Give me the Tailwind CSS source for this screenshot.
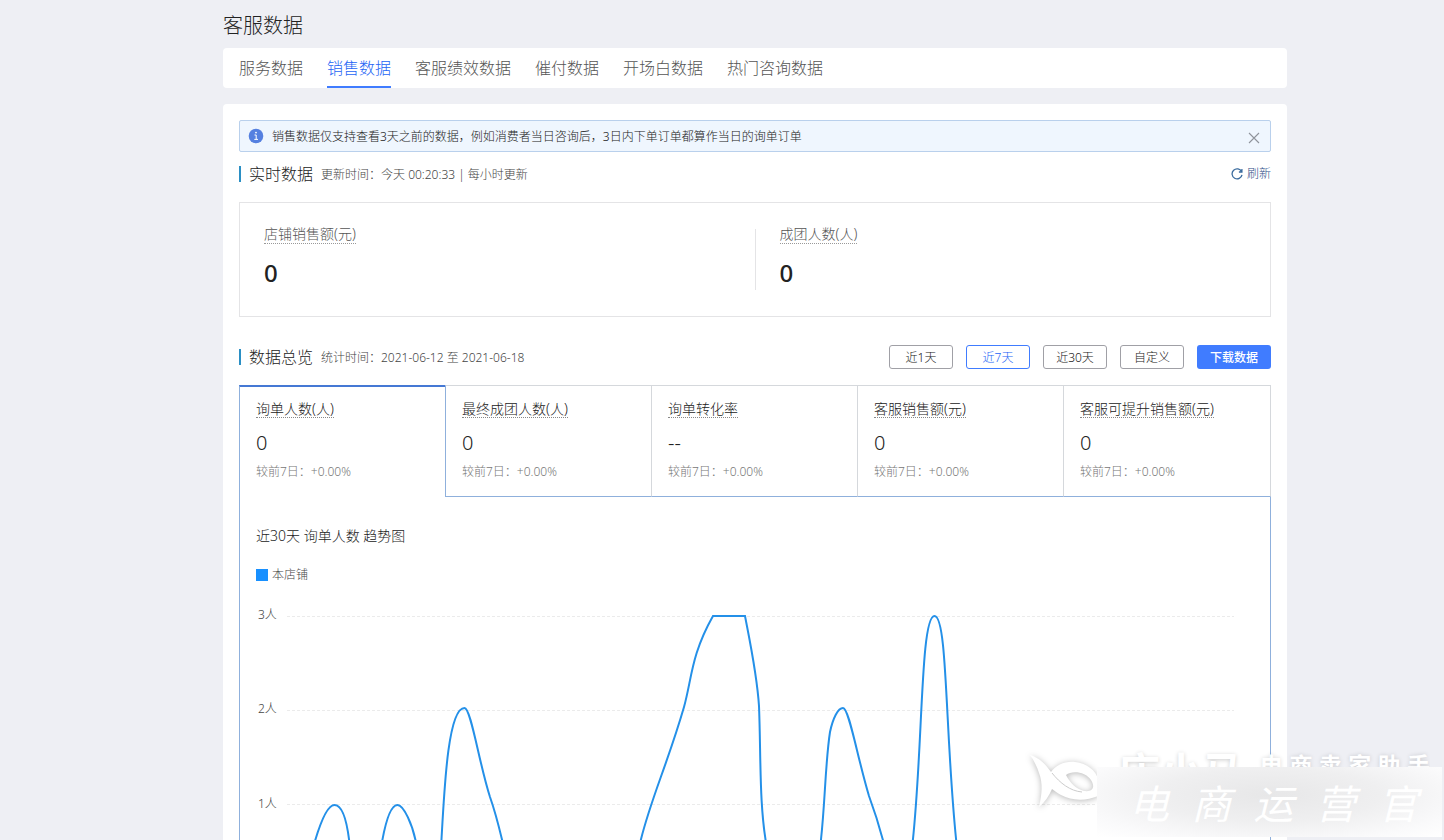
<!DOCTYPE html>
<html lang="zh-CN">
<head>
<meta charset="utf-8">
<title>客服数据</title>
<script src="https://cdn.jsdelivr.net/npm/@tailwindcss/browser@4"></script>
</head>
<body class="bg-[#eeeff4]">
<div class="relative h-screen overflow-hidden pl-[66px] font-['Noto_Sans','Noto_Sans_CJK_SC',sans-serif] font-light text-[#222]">
  <div class="mx-auto flex h-full max-w-[1064px] flex-col">
    <h1 class="h-12 shrink-0 pt-2.5 text-xl leading-8">客服数据</h1>
    <nav class="flex h-10 shrink-0 gap-6 rounded bg-white px-4 text-base leading-10 text-[#555]">
      <a href="#" class="block h-10">服务数据</a>
      <a href="#" class="block h-10 border-b-2 border-[#407cff] text-[#2464f5]" aria-current="page">销售数据</a>
      <a href="#" class="block h-10">客服绩效数据</a>
      <a href="#" class="block h-10">催付数据</a>
      <a href="#" class="block h-10">开场白数据</a>
      <a href="#" class="block h-10">热门咨询数据</a>
    </nav>
    <main class="mt-4 grow rounded-t bg-white p-4">
      <div class="flex h-8 items-center rounded-xs border border-[#b9d0ec] bg-[#eff6fe] px-2 text-xs" role="status">
        <svg class="mr-2 size-4" viewBox="0 0 16 16"><circle cx="8" cy="8" r="7.300" fill="#5580e0"/><path d="M6.500 7h1.700v4.200M6.300 11.400h3.700" stroke="#fff" fill="none"/><circle cx="8" cy="4.600" r=".9" fill="#fff"/></svg>
        <p class="grow pt-0.5">销售数据仅支持查看3天之前的数据，例如消费者当日咨询后，3日内下单订单都算作当日的询单订单</p>
        <button class="mt-1 flex size-4 items-center justify-center" aria-label="关闭"><svg class="size-3" viewBox="0 0 12 12" stroke="#8f949c" stroke-width="1.100"><path d="M1 1l10 10M11 1L1 11"/></svg></button>
      </div>
      <div class="mt-3 flex h-5 items-center">
        <span class="mr-2 h-4 w-0.5 bg-[#2b8fc4]"></span>
        <h2 class="text-base">实时数据</h2>
        <span class="ml-2 grow pt-0.5 text-xs text-[#444]">更新时间：今天 00:20:33 | 每小时更新</span>
        <button class="flex items-center gap-1 text-xs text-[#1f4a85]"><svg class="size-3" viewBox="0 0 12 12" fill="none" stroke="#3a6b9e" stroke-width="1.300"><path d="M10.600 3.700A5 5 0 1 0 11 6.800M10.900 1v3H7.900"/></svg>刷新</button>
      </div>
      <section class="mt-[18px] flex h-[115px] border border-[#e4e4e6] py-[26px] text-sm text-[#555]">
        <div class="flex-1 border-r border-[#e4e4e6] pl-6"><span class="-mt-1 block h-[19px] w-fit border-b border-dotted border-[#999] leading-[18px]">店铺销售额(元)</span><strong class="mt-3 block text-2xl leading-[34px] font-medium text-[#222]">0</strong></div>
        <div class="flex-1 pl-6"><span class="-mt-1 block h-[19px] w-fit border-b border-dotted border-[#999] leading-[18px]">成团人数(人)</span><strong class="mt-3 block text-2xl leading-[34px] font-medium text-[#222]">0</strong></div>
      </section>
      <div class="mt-7 flex h-6 items-center">
        <span class="mr-2 h-4 w-0.5 bg-[#2b8fc4]"></span>
        <h2 class="text-base">数据总览</h2>
        <span class="ml-2 grow pt-0.5 text-xs text-[#444]">统计时间：2021-06-12 至 2021-06-18</span>
        <div class="flex gap-[13px] text-xs">
          <button class="h-6 w-16 rounded-[3px] border border-[#a0a0a6] pt-0.5">近1天</button>
          <button class="h-6 w-16 rounded-[3px] border border-[#407cff] pt-0.5 text-[#2464f5]">近7天</button>
          <button class="h-6 w-16 rounded-[3px] border border-[#a0a0a6] pt-0.5">近30天</button>
          <button class="h-6 w-16 rounded-[3px] border border-[#a0a0a6] pt-0.5">自定义</button>
          <button class="h-6 w-[74px] rounded-[3px] bg-[#407cff] pt-0.5 font-medium text-white">下载数据</button>
        </div>
      </div>
      <section class="mt-4 grid h-28 grid-cols-[206fr_206fr_206fr_206fr_208fr] text-sm">
        <button class="flex flex-col items-start border-t-2 border-l border-t-[#4578d4] border-l-[#8fb0dc] pt-[14px] pl-4"><span class="h-[17px] border-b border-dotted border-[#888] leading-4">询单人数(人)</span><span class="mt-3 text-xl leading-[26px]">0</span><span class="mt-2 text-xs leading-4 text-[#777]">较前7日：+0.00%</span></button>
        <button class="flex flex-col items-start border-t border-b border-l border-t-[#d5d8dc] border-b-[#8fb0dc] border-l-[#8fb0dc] pt-[15px] pl-4"><span class="h-[17px] border-b border-dotted border-[#888] leading-4">最终成团人数(人)</span><span class="mt-3 text-xl leading-[26px]">0</span><span class="mt-2 text-xs leading-4 text-[#777]">较前7日：+0.00%</span></button>
        <button class="flex flex-col items-start border-t border-b border-l border-[#d5d8dc] border-b-[#8fb0dc] pt-[15px] pl-4"><span class="h-[17px] border-b border-dotted border-[#888] leading-4">询单转化率</span><span class="mt-3 text-xl leading-[26px]">--</span><span class="mt-2 text-xs leading-4 text-[#777]">较前7日：+0.00%</span></button>
        <button class="flex flex-col items-start border-t border-b border-l border-[#d5d8dc] border-b-[#8fb0dc] pt-[15px] pl-4"><span class="h-[17px] border-b border-dotted border-[#888] leading-4">客服销售额(元)</span><span class="mt-3 text-xl leading-[26px]">0</span><span class="mt-2 text-xs leading-4 text-[#777]">较前7日：+0.00%</span></button>
        <button class="flex flex-col items-start border border-[#d5d8dc] border-b-[#8fb0dc] pt-[15px] pl-4"><span class="h-[17px] border-b border-dotted border-[#888] leading-4">客服可提升销售额(元)</span><span class="mt-3 text-xl leading-[26px]">0</span><span class="mt-2 text-xs leading-4 text-[#777]">较前7日：+0.00%</span></button>
      </section>
      <section class="border-x border-[#8fb0dc] pt-7">
        <h3 class="pl-4 text-sm leading-[22px]">近30天 询单人数 趋势图</h3>
        <p class="mt-[18px] flex items-center gap-1 pl-4 text-xs leading-5 text-[#444]"><span class="size-3 bg-[#1890ff]"></span>本店铺</p>
        <svg class="block w-full" viewBox="0 0 1030 260" fill="none" role="img" aria-label="询单人数趋势图">
          <g stroke="#ebebeb" stroke-dasharray="3 2"><path d="M47 31.500H994M47 125.500H994M47 219.500H994"/></g>
          <g fill="#444" font-size="12"><text x="18" y="34">3人</text><text x="18" y="128">2人</text><text x="18" y="223">1人</text></g>
          <path stroke="#2490e8" stroke-width="2" d="M73 263C81 234 88 220 94.500 220S107 232 110 263M141 263C146 232 152 220 157.500 220S173 238 177 263M201 263C204 213 207 123 224.500 123C231 123 239 178 250 212C256 229 261 250 264 263M399 263C407 223 427 181 444 122C452 93 451 70 473 31H505C511 62 517 90 519 121C521 170 519 222 527 263M580 263C585 225 585 179 590 147C593 133 598 123 603 123C609 123 617 171 629 211C636 230 641 247 645 263M672 263C683 170 680 31 694.500 31C708 31 705 155 717 263"/>
        </svg>
      </section>
    </main>
  </div>

  <!-- Brand watermark over the lower right corner -->
  <div class="pointer-events-none absolute right-0.5 bottom-[3px] h-[92px] w-[422px] text-white">
    <svg class="absolute top-0 left-0 h-20 w-[110px] drop-shadow-[0_1px_3px_rgba(0,0,0,0.28)]" viewBox="0 0 110 80" fill="#fff">
      <path fill-rule="evenodd" d="M10 10C20 13 26 20 31 27C36 20 45 16 55 17C67 18 76 26 78 34V51C66 56 52 56 41 50C37 48 35 46 32 44C29 51 25 57 19 62C22 50 23 38 19 28C17 22 14 15 10 10ZM46 30C52 25 66 27 71 35C76 43 72 47 64 46C56 44 50 38 46 30Z"/>
      <path d="M32 28C40 38 50 46 62 47" fill="none" stroke="#ccc"/>
    </svg>
    <div class="absolute top-0 left-[98px] flex h-[22px] w-[312px] items-start justify-between overflow-hidden font-bold">
      <span class="pt-1.5 text-[42px] leading-[42px] [text-shadow:0_1px_4px_rgba(0,0,0,0.2)]">店小马</span>
      <span class="flex w-[170px] justify-between pt-2 text-[23px] leading-6 [text-shadow:0_0_4px_rgba(0,0,0,0.16)]"><span>电</span><span>商</span><span>卖</span><span>家</span><span>助</span><span>手</span></span>
    </div>
    <div class="absolute right-0 bottom-0 flex h-[70px] w-[345px] items-center justify-between bg-[radial-gradient(ellipse_at_50%_40%,#e7e7e8_0%,#efeff0_45%,#fafafb_80%,#fff_100%)] pr-6 pl-8 font-['Noto_Sans_CJK_SC',sans-serif] text-[40px] font-normal italic">
      <span>电</span><span>商</span><span>运</span><span>营</span><span>官</span>
    </div>
  </div>
</div>
</body>
</html>
